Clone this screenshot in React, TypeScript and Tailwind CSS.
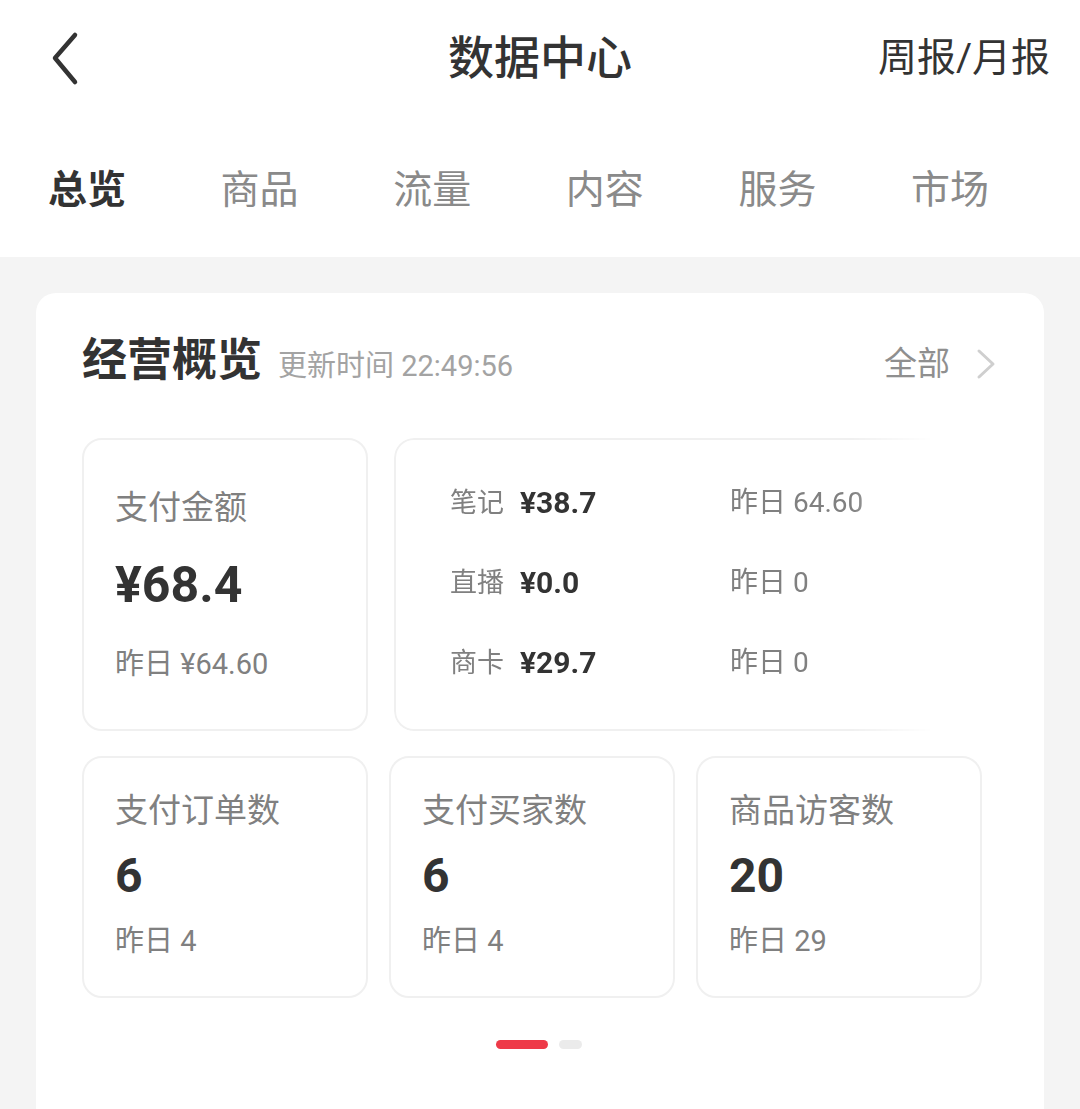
const yesterdayRows = [
  { label: "笔记", value: "¥38.7", prev: "昨日 64.60" },
  { label: "直播", value: "¥0.0", prev: "昨日 0" },
  { label: "商卡", value: "¥29.7", prev: "昨日 0" },
];

const smallStats = [
  { label: "支付订单数", value: "6", prev: "昨日 4" },
  { label: "支付买家数", value: "6", prev: "昨日 4" },
  { label: "商品访客数", value: "20", prev: "昨日 29" },
];

const tabs = ["总览", "商品", "流量", "内容", "服务", "市场"];

export default function App() {
  return (
    <div className="w-[1080px] h-[1109px] overflow-hidden bg-[#f4f4f4] font-['Roboto','Noto_Sans_CJK_SC',sans-serif] text-[#333]">
      <div className="bg-white">
        {/* top bar */}
        <header className="h-[116px] grid grid-cols-[1fr_auto_1fr] items-center px-[30px]">
          <div>
            <svg width="34" height="56" viewBox="0 0 34 56" fill="none" className="ml-[20px]">
              <path d="M25 5 L5 28 L25 52" stroke="#333" strokeWidth="4.5" strokeLinecap="round" strokeLinejoin="round" />
            </svg>
          </div>
          <h1 className="text-[46px] leading-[52px] font-medium text-[#333]">数据中心</h1>
          <div className="text-right text-[39px] leading-[48px] text-[#333]">周报/月报</div>
        </header>

        {/* tabs */}
        <nav className="h-[141px] flex items-center justify-between pl-[48px] pr-[91px] pt-[6px]">
          {tabs.map((t, i) => (
            <span
              key={t}
              className={
                i === 0
                  ? "text-[39px] leading-[48px] font-bold text-[#333]"
                  : "text-[39px] leading-[48px] text-[#8a8a8a]"
              }
            >
              {t}
            </span>
          ))}
        </nav>
      </div>

      <div className="pt-[36px] px-[36px]">
        <section className="bg-white rounded-[20px] h-[900px] pt-[43px] pl-[46px] pr-[48px]">
          <div className="h-[52px] flex items-center justify-between">
            <div className="flex items-baseline gap-[16px]">
              <h2 className="text-[45px] leading-[52px] font-bold text-[#333]">经营概览</h2>
              <span className="text-[29px] text-[#a3a3a3]">更新时间 22:49:56</span>
            </div>
            <div className="flex items-center gap-[26px] mt-[4px]">
              <span className="text-[33px] leading-[40px] text-[#8f8f8f]">全部</span>
              <svg width="20" height="32" viewBox="0 0 20 32" fill="none">
                <path d="M3 3 L17 16 L3 29" stroke="#cfcfcf" strokeWidth="3" strokeLinecap="round" strokeLinejoin="round" />
              </svg>
            </div>
          </div>

          {/* first row */}
          <div className="mt-[50px] flex gap-[26px] h-[293px]">
            <div className="w-[286px] shrink-0 rounded-[20px] border-2 border-[#f0f0f0] pt-[48px] pl-[31px] flex flex-col">
              <span className="text-[33px] leading-[40px] text-[#808080]">支付金额</span>
              <span className="mt-[31px] text-[50px] leading-[52px] font-bold text-[#333]">¥68.4</span>
              <span className="mt-[35px] text-[29px] leading-[36px] text-[#808080]">昨日 ¥64.60</span>
            </div>
            <div className="w-[586px] shrink-0 rounded-[20px] border-2 border-[#f0f0f0] pt-[45px] pl-[54px] flex flex-col gap-[44px] [mask-image:linear-gradient(to_right,black_78%,transparent_92%)]">
              {yesterdayRows.map((r) => (
                <div key={r.label} className="h-[36px] flex items-center leading-[36px]">
                  <div className="w-[280px] flex items-center gap-[16px]">
                    <span className="text-[27px] text-[#808080]">{r.label}</span>
                    <span className="text-[30px] font-bold text-[#333]">{r.value}</span>
                  </div>
                  <span className="text-[28px] text-[#808080]">{r.prev}</span>
                </div>
              ))}
            </div>
          </div>

          {/* second row */}
          <div className="mt-[25px] flex gap-[21px] h-[242px]">
            {smallStats.map((s) => (
              <div key={s.label} className="w-[286px] shrink-0 rounded-[20px] border-2 border-[#f0f0f0] pt-[33px] pl-[31px] flex flex-col">
                <span className="text-[33px] leading-[40px] text-[#808080]">{s.label}</span>
                <span className="mt-[19px] text-[48px] leading-[52px] font-bold text-[#333]">{s.value}</span>
                <span className="mt-[21px] text-[29px] leading-[36px] text-[#808080]">{s.prev}</span>
              </div>
            ))}
          </div>

          {/* pager */}
          <div className="mt-[42px] flex justify-center gap-[11px]">
            <span className="w-[52px] h-[9px] rounded-full bg-[#ee3a48]" />
            <span className="w-[23px] h-[9px] rounded-full bg-[#ebebeb]" />
          </div>
        </section>
      </div>
    </div>
  );
}
